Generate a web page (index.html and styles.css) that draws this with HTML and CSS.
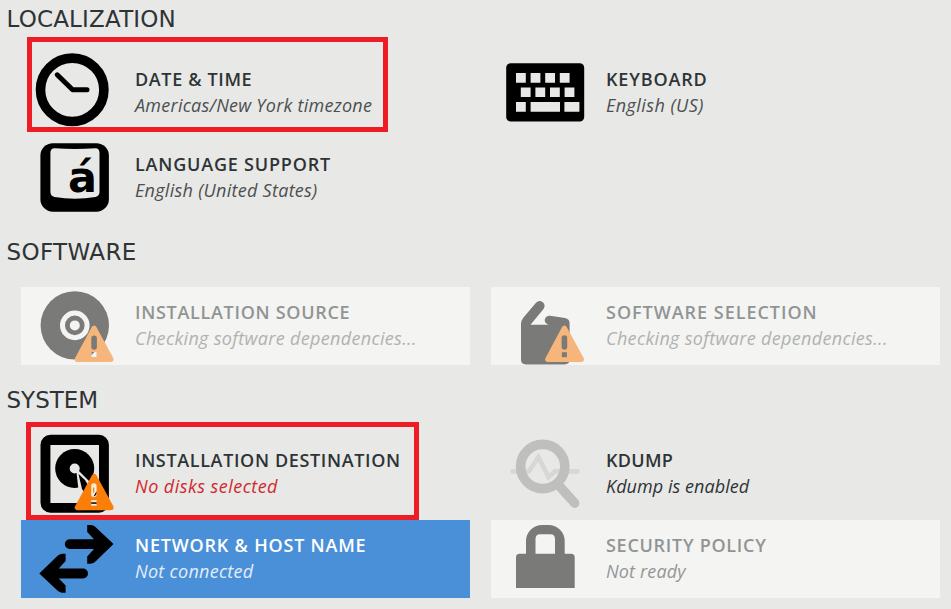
FILE: index.html
```html
<!DOCTYPE html>
<html lang="en">
<head>
<meta charset="utf-8">
<title>Installation Summary</title>
<link rel="stylesheet" href="styles.css">
</head>
<body>
<main class="hub">
  <section class="group">
    <h2 class="heading heading-localization">LOCALIZATION</h2>
    <div class="grid">
      <div class="spoke">
        <svg class="icon" viewBox="21 54 114 78">
          <circle cx="72.2" cy="89.8" r="31.7" fill="none" stroke="#000" stroke-width="9.6"/>
          <path d="M57.2 74.8 72.6 89.8H87" fill="none" stroke="#000" stroke-width="5" stroke-linecap="round" stroke-linejoin="round"/>
        </svg>
        <div class="text"><h3 class="title t-date">DATE &amp; TIME</h3><p class="status s-date">Americas/New York timezone</p></div>
        <span class="mark mark-date"></span>
      </div>
      <div class="spoke">
        <svg class="icon" viewBox="491 54 114 78">
          <rect x="506.2" y="63.2" width="78" height="58.3" rx="4.5"/>
          <g fill="#e8e8e6">
            <path d="M516 73h9.8v9.7H516zM530.6 73h9.8v9.7h-9.8zM545.2 73h9.8v9.7h-9.8zM559.8 73h9.8v9.7h-9.8z"/>
            <path d="M520.8 87.4h9.8v9.7h-9.8zM535.4 87.4h9.8v9.7h-9.8zM550 87.4h9.8v9.7H550zM564.6 87.4h9.8v9.7h-9.8z"/>
            <path d="M516 102h9.8v9.8H516zM530.6 102H560v9.8h-29.4zM564.4 102h15v9.8h-15z"/>
          </g>
        </svg>
        <div class="text"><h3 class="title t-keyboard">KEYBOARD</h3><p class="status s-keyboard">English (US)</p></div>
      </div>
      <div class="spoke">
        <svg class="icon" viewBox="21 139 114 78">
          <rect x="40.4" y="143.2" width="68.5" height="68.5" rx="12.5"/>
          <path d="M54.5 148.3Q75 149.6 95.5 148.3Q99.5 148.5 99.5 153V192Q99.5 196 95.5 197Q75 200.5 54.5 197Q50.4 196 50.4 192V153Q50.4 148.500 54.5 148.3Z" fill="#e8e8e6"/>
          <text class="key-letter" x="68" y="192">á</text>
        </svg>
        <div class="text"><h3 class="title t-language">LANGUAGE SUPPORT</h3><p class="status s-language">English (United States)</p></div>
      </div>
    </div>
  </section>

  <section class="group">
    <h2 class="heading heading-software">SOFTWARE</h2>
    <div class="grid">
      <div class="spoke disabled">
        <svg class="icon" viewBox="21 287 114 78">
          <circle cx="74.8" cy="325.4" r="34.2" fill="#7a7a78"/>
          <circle cx="74.8" cy="325.4" r="12.3" fill="none" stroke="#f4f4f2" stroke-width="5"/>
          <circle cx="74.8" cy="325.4" r="5" fill="#f4f4f2"/>
          <path d="M94.1 328.5 77.5 359.3H110.8Z" fill="#f5b57b" stroke="#f5b57b" stroke-width="5.5" stroke-linejoin="round"/>
          <path d="M94.1 338.4V347" stroke="#7a7a78" stroke-width="5.6" stroke-linecap="round"/>
          <path d="M91.5 352h5v5h-5z" fill="#f4f4f2"/><path d="M91.5 352h3l-3 3z" fill="#7a7a78"/>
        </svg>
        <div class="text"><h3 class="title t-source">INSTALLATION SOURCE</h3><p class="status s-checking">Checking software dependencies...</p></div>
      </div>
      <div class="spoke disabled">
        <svg class="icon" viewBox="491 287 114 78">
          <path d="M521 324Q521 320.5 523.5 317.5L536 302.8Q539 299.9 542.5 302Q546.2 305 543.5 309L530.5 324.8H548.5Q544.2 323 544.8 319.5Q546 315.5 550 315.8L565 318Q569.6 319 569.6 323V359.5Q569.6 364.4 564.5 364.4H526Q521 364.4 521 359.5Z" fill="#7a7a78"/>
          <path d="M564.4 328.5 547.9 359.3H581.2Z" fill="#f5b57b" stroke="#f5b57b" stroke-width="5.5" stroke-linejoin="round"/>
          <path d="M564.4 338V347" stroke="#7a7a78" stroke-width="5.6" stroke-linecap="round"/>
          <path d="M561.9 352.2h5v5h-5z" fill="#7a7a78"/>
        </svg>
        <div class="text"><h3 class="title t-selection">SOFTWARE SELECTION</h3><p class="status s-checking">Checking software dependencies...</p></div>
      </div>
    </div>
  </section>

  <section class="group">
    <h2 class="heading heading-system">SYSTEM</h2>
    <div class="grid">
      <div class="spoke warning">
        <svg class="icon" viewBox="21 435 114 78">
          <rect x="40.5" y="434.8" width="68.4" height="77.9" rx="10"/>
          <path d="M50.4 445H99V503H50.4z" fill="#e8e8e6"/>
          <circle cx="74.7" cy="468.5" r="19.5"/>
          <path d="M76 468 78.5 490H92L89 481Z" fill="#e8e8e6"/>
          <circle cx="74.7" cy="468.5" r="5" fill="#e8e8e6"/>
          <path d="M78.500 474 85 480 92 492 88 498 82 489Z"/>
          <path d="M94.2 476.7 77.5 507.5H110.9Z" fill="#fb7e08" stroke="#fb7e08" stroke-width="5.5" stroke-linejoin="round"/>
          <path d="M93.9 486V494.5" stroke="#f6ead8" stroke-width="5.4" stroke-linecap="round"/>
          <path d="M93.6 487.5V492.500" stroke="#fb7e08" stroke-width="1.2"/>
          <path d="M93.5 496.500 96.400 491.500Q97.200 495.500 93.500 496.500Z"/>
          <path d="M91.2 500.2h5.4v5.5h-5.4z" fill="#f6ead8"/><path d="M91.2 502.300h5.4v1.500h-5.4z"/>
        </svg>
        <div class="text"><h3 class="title t-destination">INSTALLATION DESTINATION</h3><p class="status s-disks">No disks selected</p></div>
        <span class="mark mark-destination"></span>
      </div>
      <div class="spoke strong">
        <svg class="icon" viewBox="491 435 114 78">
          <path d="M510.6 471.4H529L538.3 457 548.5 477 555 471.4H579.2" fill="none" stroke="#d7d7d5" stroke-width="4.6"/>
          <circle cx="542.7" cy="466.5" r="22.1" fill="none" stroke="#bfbfbd" stroke-width="9.6"/>
          <path d="M558 484.5 574.7 503.2" stroke="#bfbfbd" stroke-width="9.4" stroke-linecap="round"/>
        </svg>
        <div class="text"><h3 class="title t-kdump">KDUMP</h3><p class="status s-kdump">Kdump is enabled</p></div>
      </div>
      <div class="spoke selected">
        <svg class="icon" viewBox="21 520 114 78">
          <path id="arrow" d="M87.2 524.9H91Q94 525.2 96 527.5L113.5 544 96 561Q93.5 563.8 90.5 563.8H87.2V556.5L94 549H69.7A4.9 4.9 0 0 1 69.7 539.2H94L87.2 532Z"/>
          <use href="#arrow" transform="rotate(180 76.4 558.8)"/>
        </svg>
        <div class="text"><h3 class="title t-network">NETWORK &amp; HOST NAME</h3><p class="status s-network">Not connected</p></div>
      </div>
      <div class="spoke disabled security">
        <svg class="icon" viewBox="491 520 114 78">
          <path d="M516 588V557.5Q516 553.8 519.7 553.8H526V541A16 16 0 0 1 542 525H548.7A16 16 0 0 1 564.7 541V553.8H571Q574.7 553.8 574.7 557.5V588ZM535.5 553.8H555V539Q555 534.2 550.5 534.2H540Q535.5 534.2 535.5 539Z" fill="#7a7a78" fill-rule="evenodd"/>
        </svg>
        <div class="text"><h3 class="title t-security">SECURITY POLICY</h3><p class="status s-ready">Not ready</p></div>
      </div>
    </div>
  </section>
</main>
</body>
</html>
```

FILE: styles.css
```css
body {
  margin: 0;
  background: #e8e8e6;
  color: #2e3436;
  font-family: "Open Sans", "Noto Sans", sans-serif;
  overflow: hidden;
}

.heading {
  margin: 0;
  padding: 16px 0 16px 6.5px;
  font: 400 23px/38px "DejaVu Sans", sans-serif;
}

.heading-localization { letter-spacing: 0.18px; }
.heading-software { letter-spacing: 0.35px; }

.group:first-child .heading { padding-top: 0; }

.grid {
  display: grid;
  grid-template-columns: 449px 449px;
  grid-auto-rows: 78px;
  gap: 7px 21px;
  padding-left: 21px;
}

.spoke {
  position: relative;
  display: flex;
}

.icon {
  flex: none;
  width: 114px;
  height: 78px;
  overflow: visible;
}

.key-letter { font: 700 43px "DejaVu Sans", sans-serif; }

.text {
  padding-top: 12px;
  white-space: nowrap;
}

.spoke:nth-child(even) .text { padding-left: 1px; }

.title {
  margin: 0;
  font-size: 18px;
  font-weight: 600;
  line-height: 26px;
}

.status {
  margin: 0;
  color: #4b5052;
  font-size: 18px;
  font-style: italic;
  line-height: 26px;
}

.t-date { letter-spacing: 0.64px; }
.t-keyboard { letter-spacing: 0.85px; }
.t-language { letter-spacing: 0.8px; }
.t-source { letter-spacing: 0.7px; }
.t-selection { letter-spacing: 0.98px; }
.t-destination { letter-spacing: 0.64px; }
.t-kdump { letter-spacing: 0.3px; }
.t-network { letter-spacing: 0.8px; }
.t-security { letter-spacing: 0.72px; }

.s-date { letter-spacing: 0.26px; }
.s-keyboard { letter-spacing: 0.45px; }
.s-language { letter-spacing: 0.28px; }
.s-checking { letter-spacing: 0.33px; }
.s-disks { letter-spacing: 0.46px; }
.s-kdump { letter-spacing: 0.05px; }
.s-network { letter-spacing: 0.28px; }
.s-ready { letter-spacing: 0.15px; }

.disabled { background: #f4f4f2; }
.disabled .title { color: #919494; }
.disabled .status { color: #b0b2b1; }
.security .status { color: #939696; }
.warning .status { color: #cf2a2e; }
.strong .status { color: #2e3436; }
.selected { background: #4a90d9; }
.selected .title { color: #fff; }
.selected .status { color: #e3edf8; }

.mark {
  position: absolute;
  box-sizing: border-box;
  border: 5px solid #ee1c25;
}

.mark-date { left: 6px; top: -17px; width: 361px; height: 95px; }
.mark-destination { left: 5px; top: -13px; width: 393px; height: 98px; z-index: 1; }
```
